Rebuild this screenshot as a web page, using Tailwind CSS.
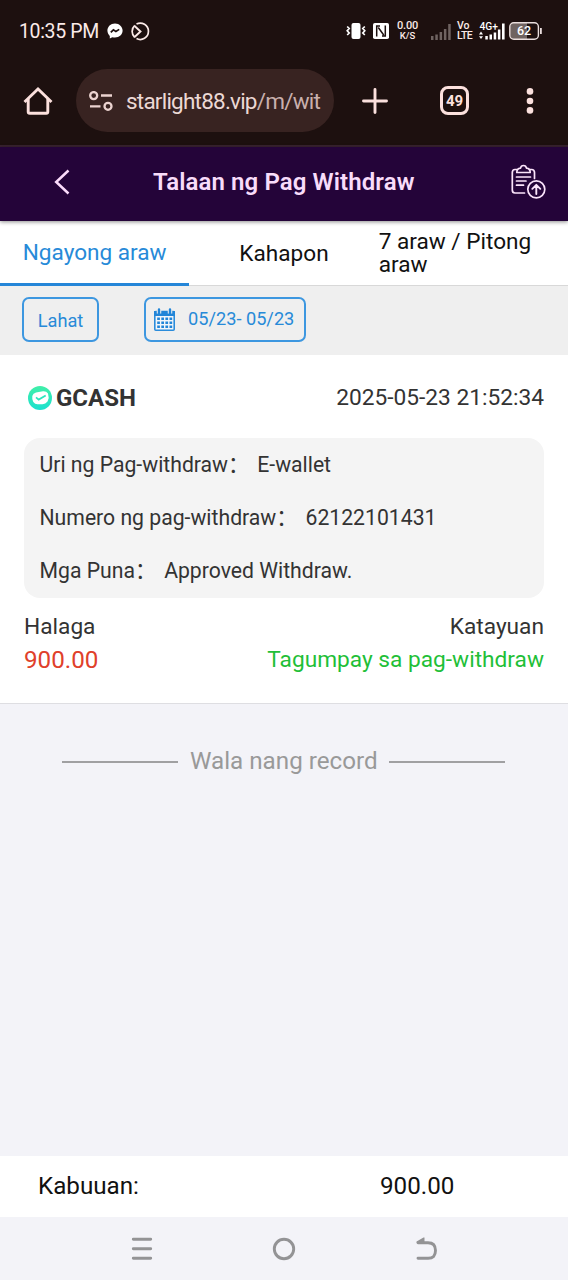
<!DOCTYPE html>
<html lang="fil">
<head>
<meta charset="utf-8">
<title>Talaan ng Pag Withdraw</title>
<script src="https://cdn.jsdelivr.net/npm/@tailwindcss/browser@4"></script>
</head>
<body class="w-[568px] h-[1280px] overflow-hidden flex flex-col bg-[#f3f3f8] font-['Roboto','Noto_Sans_CJK_SC',sans-serif] whitespace-nowrap">

<!-- Status bar -->
<div class="h-[62px] shrink-0 bg-[#1d100f] text-[#fbeae8] flex items-center pl-[19px]">
  <span class="text-[19.5px] leading-6 w-[88px] tracking-[-0.35px] pt-[2px]">10:35 PM</span>
  <svg class="w-4 h-4" viewBox="0 0 16 16"><path fill="#fff" d="M8 .4C3.600.4.4 3.600.4 7.600c0 2.200 1 4 2.400 5.300v2.500l2.500-1.200c.9.3 1.700.4 2.700.4 4.400 0 7.600-3.100 7.600-7S12.400.4 8 .4z"/><path d="M3.800 9.400l2.600-2.600 2.500 1.700 3.300-2.100" fill="none" stroke="#1d100f" stroke-width="1.700"/></svg>
  <svg class="w-[19px] h-[19px] ml-[8px]" viewBox="0 0 19 19" fill="none" stroke="#fbeae8" stroke-width="1.700"><path d="M5.500 2A8.200 8.200 0 1 1 5.500 16.600M3.800 3.400A8.200 8.200 0 0 0 3.800 15.500"/><path d="M3.600 4L9.500 9.500 3.600 15" stroke-width="1.900"/></svg>
  <svg class="w-[20px] h-[18px] ml-[196px]" viewBox="0 0 20 18"><rect x="5.500" y="1" width="9" height="16" rx="2" fill="#fff"/><path d="M1.200 4.500l2 2-2 2.200 2 2.300-2 2M18.800 4.500l-2 2 2 2.200-2 2.300 2 2" fill="none" stroke="#fff" stroke-width="1.700"/></svg>
  <svg class="w-4 h-4 ml-[7px]" viewBox="0 0 16 16"><rect width="16" height="16" rx="1.800" fill="#fff"/><path d="M7 2.900H3.700v10.500M5.300 4.500l5.400 7.500M9 13.100h3.300V2.600" fill="none" stroke="#1d100f" stroke-width="1.500"/></svg>
  <div class="ml-[7px] w-[23px] text-[11px] leading-[10px] font-medium flex flex-col items-center tracking-[-0.2px]"><span>0.00</span><span class="text-[9.500px] tracking-normal">K/S</span></div>
  <svg class="w-[20px] h-[16px] ml-[12px] mt-[1px]" viewBox="0 0 20 16" fill="#6f6361"><rect y="12" width="2.500" height="4"/><rect x="4.300" y="10.500" width="2.500" height="5.500"/><rect x="8.600" y="8" width="2.500" height="8"/><rect x="12.900" y="5" width="2.500" height="11"/><rect x="17.200" y="0" width="2.500" height="16"/></svg>
  <div class="ml-[6px] w-[17px] text-[10.500px] leading-[10px] font-medium flex flex-col tracking-[-0.5px]"><span class="tracking-normal">Vo</span><span>LTE</span></div>
  <svg class="w-[27px] h-[20px] ml-[5px]" viewBox="0 0 27 20" fill="#fff"><text x="0.500" y="9" font-size="11" font-weight="500" textLength="18.500" lengthAdjust="spacingAndGlyphs">4G+</text><path d="M0 13.400l2-2.800 2 2.800zM0 15.200l2 2.800 2-2.800z"/><rect x="6.300" y="15" width="2.500" height="3.500"/><rect x="10.500" y="13.500" width="2.500" height="5"/><rect x="14.700" y="11.500" width="2.500" height="7"/><rect x="18.900" y="8.500" width="2.500" height="10"/><rect x="23" y="2.500" width="2.600" height="16"/></svg>
  <svg class="w-[33px] h-[18px] ml-[3px]" viewBox="0 0 33 18"><path d="M5 1h13v16H5a4 4 0 0 1-4-4V5a4 4 0 0 1 4-4z" fill="#6f6361"/><rect x=".8" y=".8" width="28.600" height="16.400" rx="4" fill="none" stroke="#eadedd" stroke-width="1.400"/><path d="M31 6h1.800v6H31z" fill="#eadedd"/><text x="15" y="13.400" text-anchor="middle" font-size="12.500" font-weight="500" fill="#fff">62</text></svg>
</div>

<!-- Browser toolbar -->
<div class="h-[85px] shrink-0 bg-[#1d100f] border-b-2 border-[#38222f] flex items-center pl-[23px] pb-[6px]">
  <svg class="w-[30px] h-[30px]" viewBox="0 0 30 30" fill="none" stroke="#fbe0dd" stroke-width="2.900" stroke-linejoin="round"><path d="M5.200 13v12.800q0 1.500 1.500 1.500h16.600q1.500 0 1.500-1.500V13"/><path d="M1.500 16L15 3l13.500 13" stroke-linejoin="miter"/></svg>
  <div class="ml-[23px] w-[258px] h-[63px] rounded-full bg-[#382321] flex items-center pl-[13px]">
    <svg class="w-[24px] h-[20px]" viewBox="0 0 24 20" fill="none" stroke="#ebd3d0" stroke-width="2.300"><circle cx="4.700" cy="4.600" r="3.500"/><path d="M12 4.500h11M1 15.300h10.500"/><circle cx="19" cy="15.300" r="3.500"/></svg>
    <span class="ml-[13px] text-[22.500px] leading-7 text-[#ecd8d5] tracking-[-0.78px]">starlight88.vip<span class="text-[#c9b0ad]">/m/wit</span></span>
  </div>
  <svg class="w-[26px] h-[26px] ml-[28px]" viewBox="0 0 26 26" stroke="#fbe0dd" stroke-width="2.900" stroke-linecap="round"><path d="M1.500 13h23M13 1.500v23"/></svg>
  <div class="ml-[52px] w-[29px] h-[29px] rounded-[8px] border-[3px] border-[#fbe0dd] text-[#fbe0dd] text-[15px] font-bold flex items-center justify-center pt-px">49</div>
  <svg class="w-[8px] h-[28px] ml-[57px]" viewBox="0 0 8 28" fill="#fbe0dd"><circle cx="4" cy="4.400" r="3.300"/><circle cx="4" cy="14" r="3.300"/><circle cx="4" cy="23.400" r="3.300"/></svg>
</div>

<!-- Page header -->
<div class="h-[74px] shrink-0 bg-[#240439] shadow-[0_1px_4px_rgba(0,0,0,0.45)] relative z-10 flex items-center pl-[54px] pb-[4px]">
  <svg class="w-[17px] h-[26px]" viewBox="0 0 17 26" fill="none" stroke="#fbdcfb" stroke-width="2.500"><path d="M14.500 1.500L2.200 13l12.300 11.500"/></svg>
  <h1 class="ml-[82px] w-[357px] text-[24px] leading-7 font-semibold tracking-[0.1px] text-[#f8dcfa]">Talaan ng Pag Withdraw</h1>
  <svg class="w-[36px] h-[36px]" viewBox="0 0 36 36" fill="none" stroke="#fbe4fb" stroke-width="1.700" stroke-linecap="round" stroke-linejoin="round"><path d="M7 5.500H5Q2.300 5.500 2.300 8.500v17.500Q2.300 29 5 29h9.500M19.500 5.500h2q3 0 3 3v6"/><path d="M6.800 8.500h13.400q0-4-3.700-4.300Q16 1.500 13.500 1.500T10.500 4.200Q6.800 4.500 6.800 8.500z"/><path d="M6.500 13h14M6.500 17h9.500M6.500 21.200h7"/><circle cx="26.300" cy="25.300" r="8.500"/><path d="M26.300 30v-9M22.300 24.800l4-4 4 4" stroke-width="1.900"/></svg>
</div>

<!-- Tabs -->
<div class="h-[65px] shrink-0 bg-white border-b border-[#d8d8d8] grid grid-cols-3 text-[22.600px] leading-[23px] text-[#111]">
  <div class="text-[#278ad8] border-b-[3px] border-[#2586d8] flex items-center justify-center h-[65px]">Ngayong araw</div>
  <div class="flex items-center justify-center">Kahapon</div>
  <div class="flex items-center whitespace-normal pb-[2px]">7 araw / Pitong araw</div>
</div>

<!-- Filters -->
<div class="h-[69px] shrink-0 bg-[#efefef] flex items-start pt-[11px] pl-[22px] text-[#278ad8] text-[18.200px]">
  <div class="w-[77px] h-[45px] rounded-[7px] border-2 border-[#3d97e0] flex items-center justify-center pt-[3px]">Lahat</div>
  <div class="ml-[45px] w-[162px] h-[45px] rounded-[7px] border-2 border-[#3d97e0] flex items-center pl-[8px]">
    <svg class="w-[21px] h-[24px]" viewBox="0 0 21 24"><rect x=".8" y="3.500" width="19.400" height="18.700" rx="1" fill="#f2f6fa" stroke="#2b8cdb" stroke-width="1.600"/><path d="M0 3h21v5H0z" fill="#2185d8"/><path d="M5 0v5.500M16 0v5.500" stroke="#efefef" stroke-width="4.500"/><path d="M5 1.500V5M16 1.500V5" stroke="#2185d8" stroke-width="2.400" stroke-linecap="round"/><path d="M3.200 10.800h15M3.200 14.800h15M3.200 18.800h15" stroke="#2185d8" stroke-width="2.600" stroke-dasharray="2.700 1.400"/></svg>
    <span class="ml-[13px] pb-[2px]">05/23- 05/23</span>
  </div>
</div>

<!-- Record -->
<div class="h-[349px] shrink-0 bg-white border-b border-[#dedee2] px-6 pt-[27px] text-[#333]">
  <div class="h-[32px] flex items-center justify-between">
    <div class="flex items-center pl-[4px]">
      <svg class="w-[24px] h-[24px]" viewBox="0 0 24 24"><defs><linearGradient id="g" x1="0" y1="0" x2="0" y2="1"><stop offset="0" stop-color="#41efa8"/><stop offset="1" stop-color="#1be0cf"/></linearGradient></defs><circle cx="12" cy="12" r="12" fill="url(#g)"/><path d="M4.300 10Q5 7 8 6.500l7-1.300q3.500-.2 5 2.300 1.500 4-.5 8-2 2.500-5 2.800H9.500Q7 18.300 5.300 16 3.800 13 4.300 10z" fill="#fff"/><path d="M8 11.300l2.700 2.300 7-4" fill="none" stroke="#2be6bd" stroke-width="1.700"/></svg>
      <span class="ml-[4px] text-[24px] font-bold pb-px">GCASH</span>
    </div>
    <span class="text-[22.700px]">2025-05-23 21:52:34</span>
  </div>
  <div class="mt-[24px] h-[160px] rounded-2xl bg-[#f4f4f4] pl-[15.500px] text-[21.200px] leading-[53px] flex flex-col">
    <div class="h-[53px] flex"><span>Uri ng Pag-withdraw：</span><span class="ml-[8px]">E-wallet</span></div>
    <div class="h-[53px] flex"><span>Numero ng pag-withdraw：</span><span class="ml-[8px]">62122101431</span></div>
    <div class="h-[53px] flex"><span>Mga Puna：</span><span class="ml-[8px]">Approved Withdraw.</span></div>
  </div>
  <div class="mt-[12px] flex justify-between text-[22.700px] leading-[33px]">
    <div class="flex flex-col"><span>Halaga</span><span class="text-[#e0402a] text-[24.200px] leading-[34px]">900.00</span></div>
    <div class="flex flex-col items-end"><span>Katayuan</span><span class="text-[#1fbf38] leading-[34px]">Tagumpay sa pag-withdraw</span></div>
  </div>
</div>

<!-- End of list -->
<div class="flex-1 flex justify-center items-start pt-[42px] pr-[1px]">
  <div class="flex items-center gap-[12px] text-[24.200px] leading-[30px] text-[#999]">
    <span class="w-[116px] h-[1.500px] mt-[2px] bg-[#a0a0a2]"></span><span class="w-[187px] text-center">Wala nang record</span><span class="w-[116px] h-[1.500px] mt-[2px] bg-[#a0a0a2]"></span>
  </div>
</div>

<!-- Total -->
<div class="h-[61px] shrink-0 bg-white flex items-center text-[24.200px] text-[#111] pl-[38px]">
  <span class="w-[342px]">Kabuuan:</span><span>900.00</span>
</div>

<!-- System navigation -->
<div class="h-[63px] shrink-0 flex items-center pl-[131px] text-[#939395]">
  <svg class="w-[22px] h-[24px]" viewBox="0 0 22 24" stroke="currentColor" stroke-width="2.900" stroke-linecap="round"><path d="M2.300 2.300h17.400M2.300 11.800h17.400M2.300 21.300h17.400"/></svg>
  <svg class="w-[24px] h-[24px] ml-[119px]" viewBox="0 0 24 24" fill="none" stroke="currentColor" stroke-width="2.900"><circle cx="12" cy="12" r="9.700"/></svg>
  <svg class="w-[24px] h-[24px] ml-[118px]" viewBox="0 0 24 24" fill="none" stroke="currentColor" stroke-width="2.900" stroke-linecap="round"><path d="M4 5.800h10q7.500 0 7.500 7.800T14 21.300H4"/><path d="M10.500.6v5H2.500Q2 5 3 4.300L9.500.6z" fill="currentColor" stroke="none"/></svg>
</div>
</body>
</html>
